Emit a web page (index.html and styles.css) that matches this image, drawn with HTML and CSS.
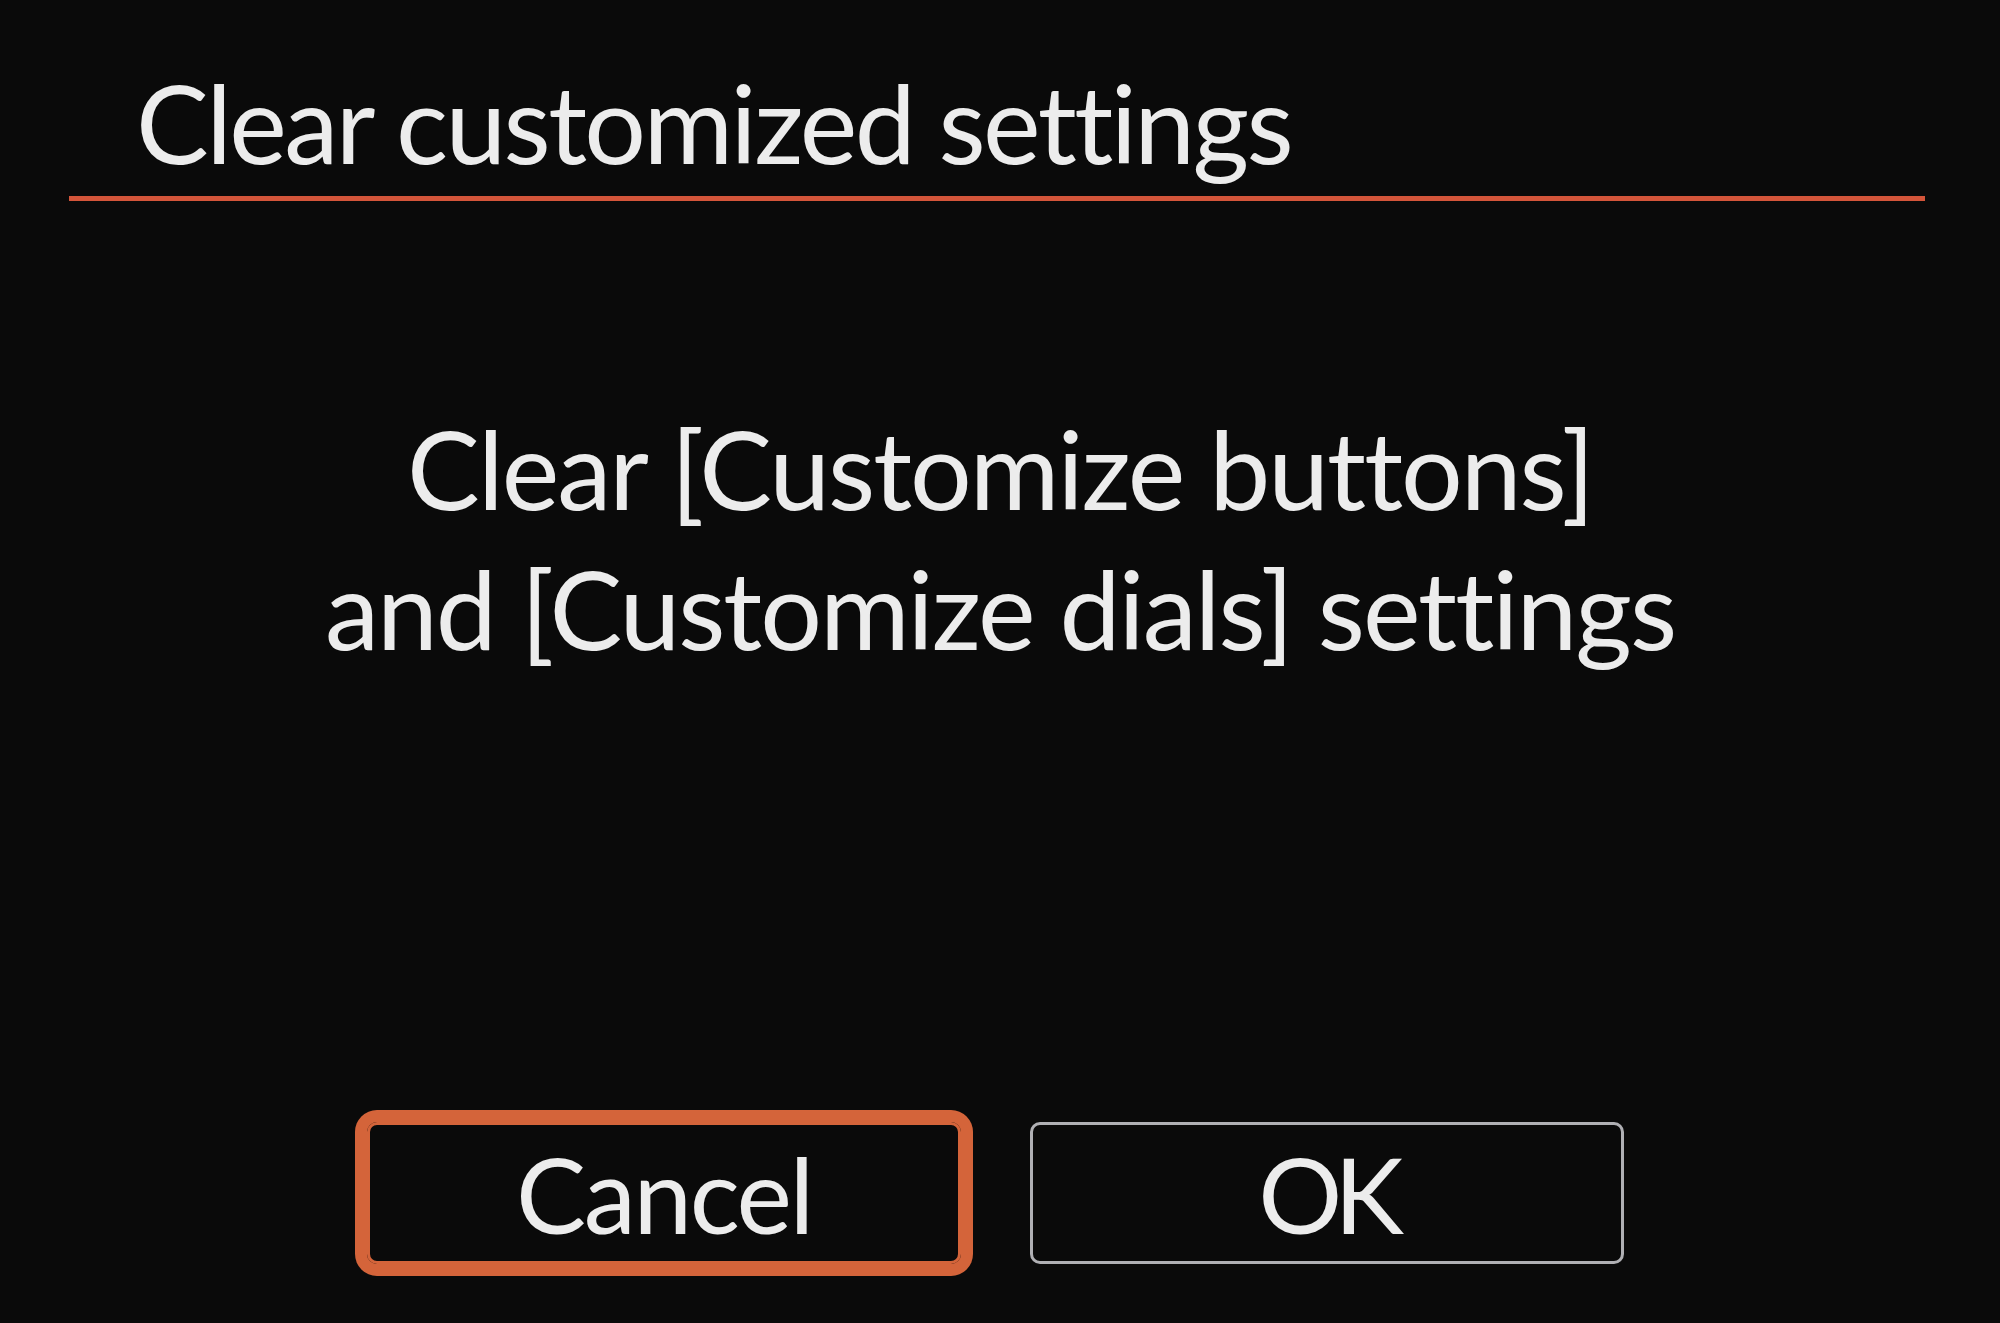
FILE: index.html
```html
<!DOCTYPE html>
<html lang="en">
<head>
    <meta charset="UTF-8">
    <meta name="viewport" content="width=device-width, initial-scale=1.0">
    <title>Clear customized settings</title>
    <link rel="stylesheet" href="styles.css">
</head>
<body>
    <div class="dialog">
        <h1 class="title">Clear customized settings</h1>

        <p class="message">
            Clear [Customize buttons]<br>
            and [Customize dials] settings
        </p>

        <div class="actions">
            <button class="btn selected">Cancel</button>
            <button class="btn btn-ok">OK</button>
        </div>
    </div>
</body>
</html>
```
FILE: styles.css
```css
body {
    margin: 0;
    background: #0a0a0a;
    color: #ececec;
    font-family: Lato, "Open Sans", sans-serif;
}

.dialog {
    height: 1323px;
    display: flex;
    flex-direction: column;
    box-sizing: border-box;
}

.title {
    margin: 0 75px 0 69px;
    padding: 57px 0 8px 67px;
    font-size: 109px;
    font-weight: normal;
    line-height: 1.2;
    letter-spacing: -2.6px;
    border-bottom: 5px solid #d4553a;
}

.message {
    margin: 197px 0 0;
    text-align: center;
    font-size: 109px;
    line-height: 140px;
    letter-spacing: -2px;
}

.actions {
    margin-top: auto;
    padding: 0 9px 59px 0;
    display: flex;
    justify-content: center;
    gap: 69px;
}

.btn {
    width: 594px;
    height: 142px;
    padding: 0;
    display: flex;
    align-items: center;
    justify-content: center;
    background: transparent;
    color: #ececec;
    font-family: inherit;
    font-size: 105px;
    letter-spacing: -2.4px;
    border: 3px solid #b0b0b4;
    border-radius: 10px;
}

.btn-ok {
    letter-spacing: -8px;
}

.btn.selected {
    border-color: #d4643a;
    box-shadow: 0 0 0 12px #d4643a;
}
```
